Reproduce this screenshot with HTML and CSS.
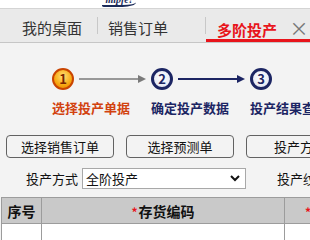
FILE: index.html
```html
<!DOCTYPE html>
<html lang="zh-CN">
<head>
  <meta charset="UTF-8" />
  <title>多阶投产</title>
  <link rel="stylesheet" href="styles.css">
</head>
<body>

  <div class="brand">
    <div class="brand-text">mipfe!</div>
  </div>

  <!-- Tab bar -->
  <div class="tabs">
    <div class="tab first">我的桌面</div>
    <span class="sep"></span>
    <div class="tab second">销售订单</div>
    <span class="sep"></span>
    <div class="tab active">
      多阶投产
      <span class="close">&times;</span>
    </div>
  </div>

  <!-- Steps -->
  <div class="steps">
    <div class="step">
      <div class="step-top">
        <span class="circle current">1</span>
        <svg class="arrow" width="67" height="10" viewBox="0 0 67 10">
          <line x1="0" y1="5" x2="61" y2="5" stroke="#7a7a7a" stroke-width="1.5" />
          <polygon points="59,1 67,5 59,9" fill="#7a7a7a" />
        </svg>
      </div>
      <div class="step-label current">选择投产单据</div>
    </div>
    <div class="step">
      <div class="step-top">
        <span class="circle">2</span>
        <svg class="arrow" width="67" height="10" viewBox="0 0 67 10">
          <line x1="0" y1="5" x2="61" y2="5" stroke="#1c2563" stroke-width="2" />
          <polygon points="59,1 67,5 59,9" fill="#1c2563" />
        </svg>
      </div>
      <div class="step-label">确定投产数据</div>
    </div>
    <div class="step">
      <div class="step-top">
        <span class="circle">3</span>
      </div>
      <div class="step-label">投产结果查询</div>
    </div>
  </div>

  <!-- Actions -->
  <div class="toolbar">
    <button class="btn">选择销售订单</button>
    <button class="btn">选择预测单</button>
    <button class="btn">投产方案</button>
  </div>

  <div class="form-row">
    <label class="field-label">投产方式</label>
    <div class="select">
      <span>全阶投产</span>
      <svg width="10" height="7" viewBox="0 0 10 7">
        <polyline points="1,1 5,5 9,1" fill="none" stroke="#111" stroke-width="2" />
      </svg>
    </div>
    <label class="field-label right">投产纹理</label>
  </div>

  <!-- Grid -->
  <table class="grid">
    <thead>
      <tr>
        <th class="col-no">序号</th>
        <th class="col-code"><span class="req">*</span>存货编码</th>
        <th class="col-more"><span class="req">*</span>存货名称</th>
      </tr>
    </thead>
    <tbody>
      <tr>
        <td></td>
        <td></td>
        <td></td>
      </tr>
    </tbody>
  </table>

</body>
</html>
```

FILE: styles.css
```css
body {
  margin: 0;
  width: 310px;
  height: 240px;
  overflow: hidden;
  background: #f3f3f3;
  font-family: "Noto Sans CJK SC", "Noto Sans", sans-serif;
  color: #222;
}

.brand {
  height: 8px;
  overflow: hidden;
  background: #fff;
  padding-left: 102px;
}

.brand-text {
  width: 34px;
  margin-top: -5px;
  font-family: "Liberation Serif", serif;
  font-style: italic;
  font-weight: bold;
  font-size: 10px;
  line-height: 10px;
  color: #1b2a58;
  border-bottom: 2px solid #1b2a58;
  border-radius: 0 0 40% 10%;
  text-align: center;
}

.tabs {
  display: flex;
  align-items: stretch;
  height: 35px;
  box-sizing: border-box;
  background: #eaeaea;
  border-top: 1px solid #d4d4d4;
  border-bottom: 1px solid #c6c6c6;
  padding-left: 22px;
}

.tab {
  font-size: 15px;
  line-height: 20px;
  padding-top: 9px;
  color: #333;
  white-space: nowrap;
}

.tab.first {
  margin-right: 15px;
}

.tab.second {
  margin-left: 10px;
  margin-right: 37px;
}

.sep {
  width: 1px;
  height: 17px;
  align-self: center;
  background: #c8c8c8;
}

.tab.active {
  flex: 1;
  padding-left: 11px;
  box-sizing: border-box;
  color: #e8141b;
  font-weight: bold;
  border-bottom: 3px solid #e8141b;
}

.close {
  color: #777;
  font-size: 19px;
  font-weight: normal;
  margin-left: 9px;
}

.steps {
  display: flex;
  padding: 25px 0 0 52px;
}

.step {
  width: 99px;
  flex-shrink: 0;
}

.step-top {
  display: flex;
  align-items: center;
  height: 22px;
}

.circle {
  width: 22px;
  height: 22px;
  box-sizing: border-box;
  border-radius: 50%;
  border: 3px solid #1c2563;
  background: radial-gradient(circle at 50% 40%, #ffffff, #dde1f0);
  color: #1c2563;
  font-size: 13px;
  font-weight: bold;
  line-height: 16px;
  text-align: center;
  flex-shrink: 0;
}

.circle.current {
  border: 2px solid #c94400;
  background: radial-gradient(circle at 50% 35%, #ffe27a, #f7a810 60%, #e27800);
  color: #7a2400;
  line-height: 18px;
}

.arrow {
  margin-left: 5px;
}

.step-label {
  margin-top: 9px;
  font-size: 13px;
  font-weight: bold;
  line-height: 18px;
  color: #1c2563;
  white-space: nowrap;
}

.step-label.current {
  color: #d2420f;
}

.toolbar {
  display: flex;
  gap: 12px;
  padding-left: 6px;
  margin-top: 18px;
}

.btn {
  width: 108px;
  height: 23px;
  flex-shrink: 0;
  padding: 0;
  background: #f3f3f3;
  border: 1px solid #626262;
  border-radius: 4px;
  font-family: inherit;
  font-size: 13px;
  color: #111;
}

.form-row {
  display: flex;
  align-items: center;
  margin-top: 10px;
  padding-left: 26px;
  white-space: nowrap;
}

.field-label {
  font-size: 13px;
  color: #111;
  margin-right: 4px;
}

.field-label.right {
  margin-left: 31px;
}

.select {
  display: flex;
  align-items: center;
  justify-content: space-between;
  width: 164px;
  height: 21px;
  box-sizing: border-box;
  flex-shrink: 0;
  background: #fff;
  border: 1px solid #a8a8a8;
  padding: 0 5px 0 3px;
  font-size: 13px;
  color: #111;
}

.grid {
  margin: 8px 0 0 1px;
  border-collapse: collapse;
  width: 400px;
  table-layout: fixed;
}

.grid th,
.grid td {
  border: 1px solid #9c9c9c;
}

.grid th {
  height: 25px;
  padding: 0;
  background: #c9c9c9;
  font-size: 14px;
  font-weight: bold;
  color: #111;
}

.grid td {
  height: 20px;
  background: #fff;
}

.col-no {
  width: 39px;
}

.col-code {
  width: 242px;
}

.col-more {
  text-align: left;
  padding-left: 20px !important;
}

.req {
  color: #e8141b;
  font-size: 12px;
  margin-right: 1px;
}
```
